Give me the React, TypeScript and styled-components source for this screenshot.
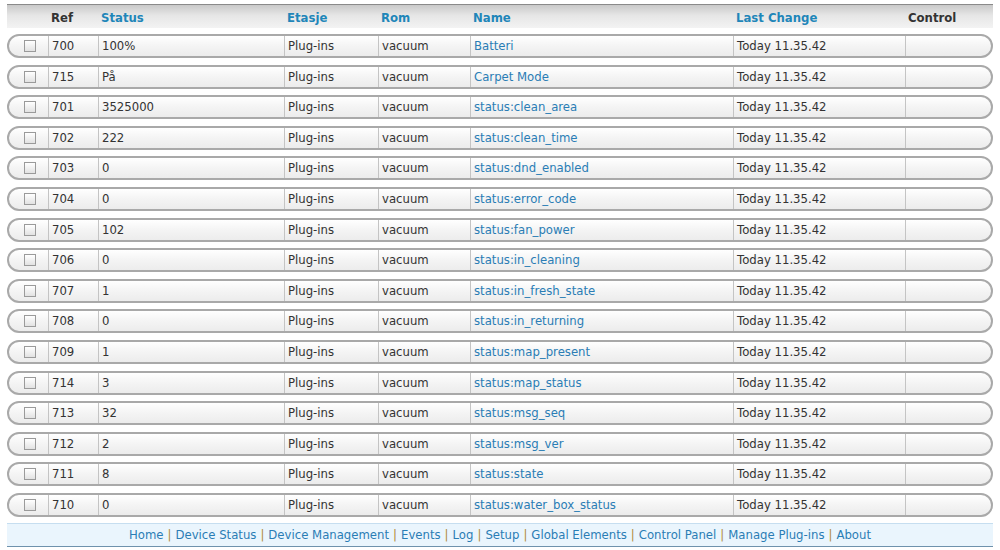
import styled, { createGlobalStyle } from 'styled-components'

const GlobalStyle = createGlobalStyle`
    body {
        margin: 0;
        background: #ffffff;
        font-family: "DejaVu Sans", Verdana, sans-serif;
        font-size: 11.7px;
        color: #333333;
    }
`

const headColumns = '41px 50px 186px 94px 92px 263px 172px 88px'
const rowColumns = '39px 50px 186px 94px 92px 263px 172px 86px'

const Page = styled.div`
    width: 986px;
    padding: 4px 0 0 7px;
`

const Header = styled.div`
    display: grid;
    grid-template-columns: ${headColumns};
    height: 22px;
    padding-top: 1px;
    border-top: 1px solid #8a8a8a;
    background: linear-gradient(#c9c9c9, #e6e6e6 45%, #f3f3f3);
    align-items: center;
`

const HeadCell = styled.div<{ $link?: boolean }>`
    font-weight: bold;
    padding-left: 3px;
    padding-top: 2px;
    color: ${p => (p.$link ? '#1f86b9' : '#333333')};
`

const List = styled.div`
    display: flex;
    flex-direction: column;
    gap: 6.6px;
    margin-top: 6px;
`

const Row = styled.div`
    display: grid;
    grid-template-columns: ${rowColumns};
    height: 24px;
    box-sizing: border-box;
    border: 2px solid #a9a9a9;
    border-radius: 12px;
    background: linear-gradient(#ffffff, #f4f4f4 50%, #ececec);
`

const Cell = styled.div<{ $link?: boolean }>`
    display: flex;
    align-items: center;
    padding-left: 3px;
    border-left: 1px solid #c4c4c4;
    color: ${p => (p.$link ? '#2a7db5' : '#333333')};
    white-space: nowrap;
    overflow: hidden;
`

const CheckCell = styled.div`
    display: flex;
    align-items: center;
    justify-content: center;
`

const Check = styled.span`
    display: block;
    width: 10px;
    height: 10px;
    border: 1px solid #9a9a9a;
    background: linear-gradient(#ffffff, #e2e2e2);
    margin-left: 2px;
`

const Footer = styled.div`
    margin-top: 6px;
    height: 22px;
    border-top: 1px solid #c6def0;
    border-bottom: 1px solid #6f92ad;
    background: #eaf5fd;
    display: flex;
    align-items: center;
    justify-content: center;
`

const NavLink = styled.a`
    color: #2a7db5;
    text-decoration: none;
`

const Sep = styled.span`
    color: #b08a3a;
    margin: 0 4px;
`

const rows: [string, string, string][] = [
    ['700', '100%', 'Batteri'],
    ['715', 'På', 'Carpet Mode'],
    ['701', '3525000', 'status:clean_area'],
    ['702', '222', 'status:clean_time'],
    ['703', '0', 'status:dnd_enabled'],
    ['704', '0', 'status:error_code'],
    ['705', '102', 'status:fan_power'],
    ['706', '0', 'status:in_cleaning'],
    ['707', '1', 'status:in_fresh_state'],
    ['708', '0', 'status:in_returning'],
    ['709', '1', 'status:map_present'],
    ['714', '3', 'status:map_status'],
    ['713', '32', 'status:msg_seq'],
    ['712', '2', 'status:msg_ver'],
    ['711', '8', 'status:state'],
    ['710', '0', 'status:water_box_status'],
]

const links = ['Home', 'Device Status', 'Device Management', 'Events', 'Log', 'Setup', 'Global Elements', 'Control Panel', 'Manage Plug-ins', 'About']

const App = () => {
    return (
        <Page>
            <GlobalStyle />
            <Header>
                <HeadCell />
                <HeadCell>Ref</HeadCell>
                <HeadCell $link>Status</HeadCell>
                <HeadCell $link>Etasje</HeadCell>
                <HeadCell $link>Rom</HeadCell>
                <HeadCell $link>Name</HeadCell>
                <HeadCell $link>Last Change</HeadCell>
                <HeadCell>Control</HeadCell>
            </Header>
            <List>
                {rows.map(([ref, status, name]) => (
                    <Row key={ref}>
                        <CheckCell><Check /></CheckCell>
                        <Cell>{ref}</Cell>
                        <Cell>{status}</Cell>
                        <Cell>Plug-ins</Cell>
                        <Cell>vacuum</Cell>
                        <Cell $link>{name}</Cell>
                        <Cell>Today 11.35.42</Cell>
                        <Cell />
                    </Row>
                ))}
            </List>
            <Footer>
                {links.map((l, i) => (
                    <span key={l}>
                        {i > 0 && <Sep>|</Sep>}
                        <NavLink href="#">{l}</NavLink>
                    </span>
                ))}
            </Footer>
        </Page>
    )
}

export default App
